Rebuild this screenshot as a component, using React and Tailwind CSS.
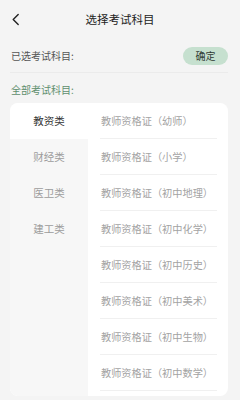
import React, { useState } from 'react';

const categories = ['教资类', '财经类', '医卫类', '建工类'];

const subjects = [
  '教师资格证（幼师）',
  '教师资格证（小学）',
  '教师资格证（初中地理）',
  '教师资格证（初中化学）',
  '教师资格证（初中历史）',
  '教师资格证（初中美术）',
  '教师资格证（初中生物）',
  '教师资格证（初中数学）',
];

function App() {
  const [active, setActive] = useState(0);

  return (
    <div
      className="w-[240px] h-[400px] bg-[#f4f4f4] overflow-hidden flex flex-col"
      style={{ fontFamily: '"Noto Sans CJK SC", "Noto Sans", sans-serif' }}
    >
      {/* header */}
      <div className="h-[39px] flex items-center shrink-0">
        <div className="w-[26px] pl-[11px] flex items-center">
          <svg width="9" height="13" viewBox="0 0 9 13" fill="none">
            <path d="M7.2 1.5 L2.2 6.5 L7.2 11.5" stroke="#222" strokeWidth="1.4" strokeLinecap="round" strokeLinejoin="round" />
          </svg>
        </div>
        <div className="flex-1 text-center text-[11.5px] leading-none text-[#222]">选择考试科目</div>
        <div className="w-[26px]" />
      </div>

      {/* selected row */}
      <div className="ml-[10px] mr-[12px] pt-[8px] pb-[7px] flex items-center justify-between border-b border-[#ebebeb]">
        <span className="text-[10px] leading-none text-[#555] pl-[1px]">已选考试科目:</span>
        <button className="w-[45px] h-[18px] rounded-full bg-[#c6e0cf] text-[10px] leading-none text-[#2f3b33]">
          确定
        </button>
      </div>

      <div className="mt-[11px] ml-[11px] text-[10px] leading-[12px] text-[#5f8f6e]">全部考试科目:</div>

      {/* card */}
      <div className="mt-[7px] ml-[10px] w-[218px] h-[293px] bg-white rounded-[8px] overflow-hidden flex">
        <div className="w-[78px] bg-[#f7f7f7] flex flex-col">
          {categories.map((c, i) => (
            <div
              key={c}
              onClick={() => setActive(i)}
              className={`h-[36px] flex items-center justify-center text-[10.5px] ${
                i === active ? 'bg-white text-[#333]' : 'text-[#9c9c9c]'
              }`}
            >
              {c}
            </div>
          ))}
        </div>
        <div className="flex-1 pl-[12px] pr-[11px] flex flex-col">
          {subjects.map((s) => (
            <div key={s} className="h-[36px] shrink-0 flex items-center border-b border-[#f0f0f0] text-[10.2px] text-[#a3a3a3] pl-[1px]">
              {s}
            </div>
          ))}
        </div>
      </div>
    </div>
  );
}

export default App;
